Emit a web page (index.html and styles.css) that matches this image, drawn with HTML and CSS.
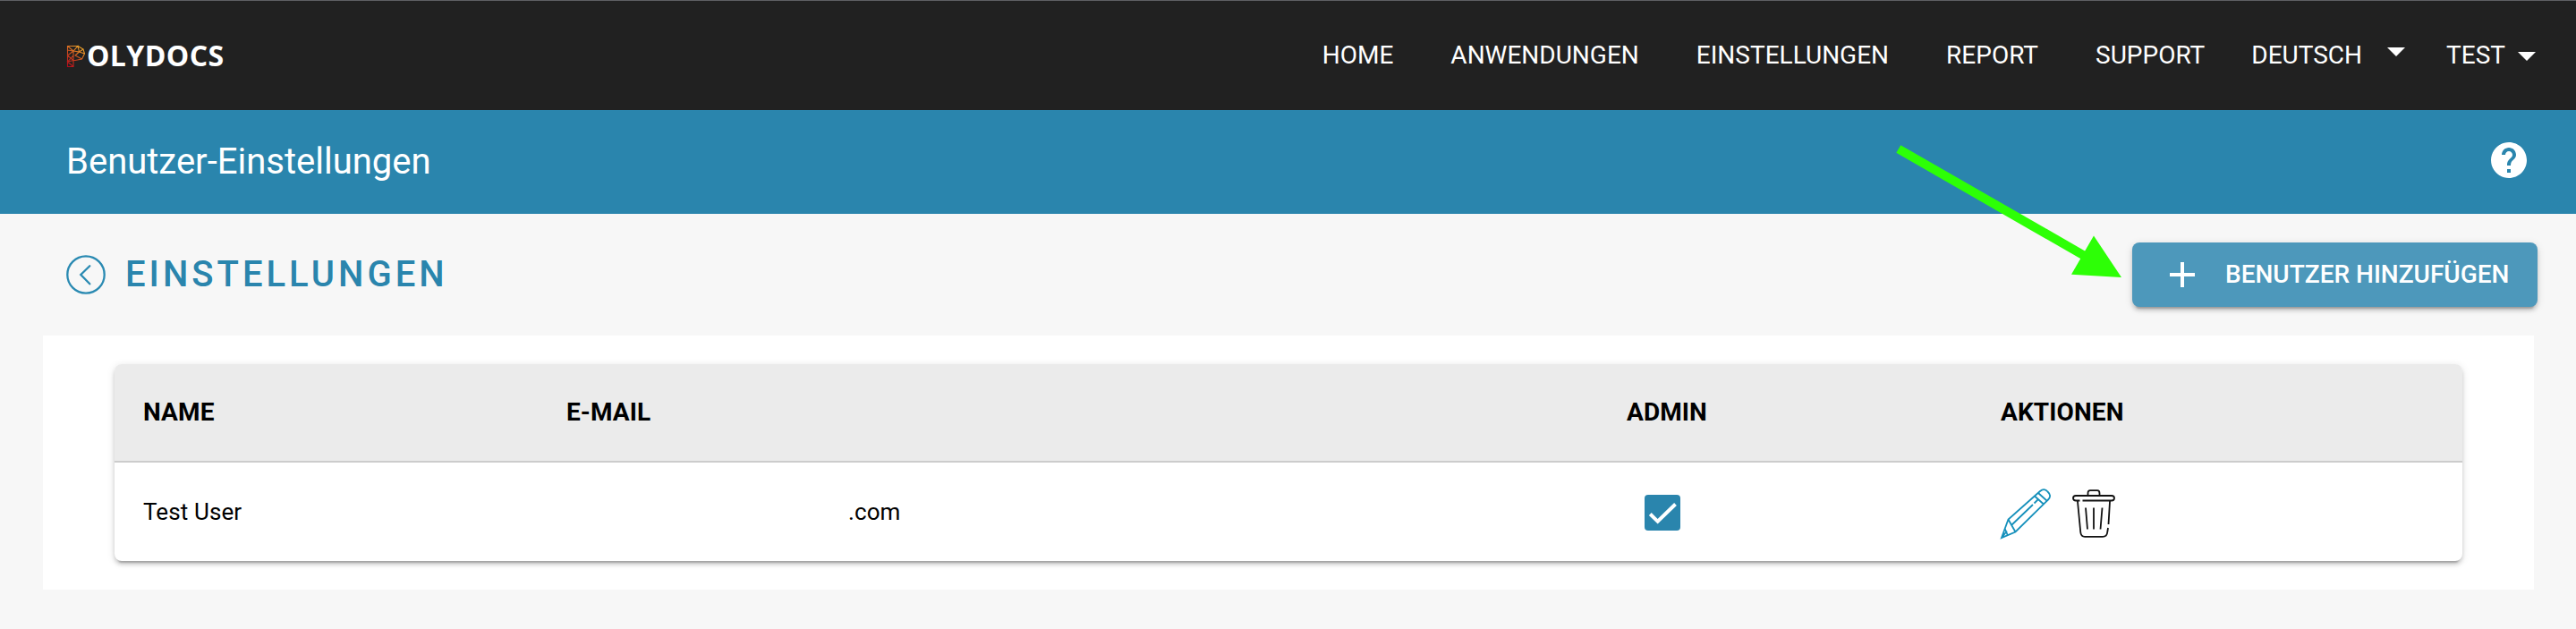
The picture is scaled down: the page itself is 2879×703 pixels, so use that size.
FILE: index.html
```html
<!DOCTYPE html>
<html lang="de">
<head>
<meta charset="utf-8">
<title>Benutzer-Einstellungen</title>
<link rel="stylesheet" href="styles.css">
</head>
<body>
<header class="topbar">
  <a class="logo">
    <svg class="logo-mark" viewBox="0 0 22 26">
      <defs><linearGradient id="heat" x1="0" y1="1" x2="0.6" y2="0"><stop offset="0" stop-color="#b3081b"/><stop offset="0.5" stop-color="#c9461f"/><stop offset="1" stop-color="#eda02a"/></linearGradient></defs>
      <path d="M1.500 1.500H13L19 5L20.500 10L17.500 16L10 17.500H8V24.500H1.500ZM1.500 1.500L8 7L13 1.500L14.500 8L8 7V17.500L1.500 12L8 7L1.500 6M14.500 8L20.500 10M14.500 8L10 12L17.500 16M8 17.500L1.500 19L8 24.500M1.500 12L1.500 19L8 12M13 1.500L19 5L14.500 8"/>
    </svg>
    <span class="logo-text">OLYDOCS</span>
  </a>
  <nav class="nav">
    <a>HOME</a><a>ANWENDUNGEN</a><a>EINSTELLUNGEN</a><a>REPORT</a><a>SUPPORT</a>
    <a class="lang">DEUTSCH<i class="caret caret-lang"></i></a>
    <a class="user">TEST<i class="caret caret-user"></i></a>
  </nav>
</header>
<section class="titlebar">
  <h2 class="title">Benutzer-Einstellungen</h2>
  <svg class="help" viewBox="0 0 24 24"><path d="M12 2C6.480 2 2 6.480 2 12s4.480 10 10 10 10-4.480 10-10S17.520 2 12 2zm1 17h-2v-2h2v2zm2.070-7.750l-.9.920C13.450 12.900 13 13.500 13 15h-2v-.5c0-1.100.450-2.100 1.170-2.830l1.240-1.260c.370-.360.590-.860.590-1.410 0-1.100-.9-2-2-2s-2 .9-2 2H8c0-2.210 1.790-4 4-4s4 1.790 4 4c0 .880-.360 1.680-.930 2.250z"/></svg>
</section>
<main>
  <div class="heading">
    <svg class="back" viewBox="0 0 44 44"><circle cx="22" cy="22" r="20.700"/><path d="M26.300 12.200L16.300 22L26.300 32.300"/></svg>
    <h1 class="page-title">EINSTELLUNGEN</h1>
    <button class="add"><svg class="plus" viewBox="0 0 24 24"><path d="M19 13h-6v6h-2v-6H5v-2h6V5h2v6h6v2z"/></svg><span>BENUTZER HINZUFÜGEN</span></button>
  </div>
  <div class="panel">
    <div class="table">
      <div class="row head"><span>NAME</span><span>E-MAIL</span><span>ADMIN</span><span>AKTIONEN</span></div>
      <div class="row"><span>Test User</span><span class="mail">.com</span>
        <span class="check"><svg class="box" viewBox="0 0 40 40"><rect width="40" height="40" rx="4"/><path d="M6.300 21.500L14.700 29.800L34.500 10.500"/></svg></span>
        <span class="actions">
          <svg class="pencil" viewBox="0 0 56 56"><path d="M1 55L8.500 34.500L44 3Q48.500-1 52.500 3.500Q57.500 8 53 12.500L16.500 48.500ZM8.500 34.500L16.500 48.500M1 55L7 47.500M38 8.500L48 17.500M42 5L52 14M12 41L36 18M37.500 16.500L42 12M5 45.500L7.500 51.500"/></svg>
          <svg class="trash" viewBox="0 0 48 54"><path d="M17.500 6.500V4.500Q17.500 1.200 20 1.200H28Q30.500 1.200 30.500 4.500V6.500M8.500 12.500H4Q1 12.500 1 9.800Q1 7 4 7H44Q47 7 47 9.800Q47 12.500 44 12.500H11.500M6 13.500L9.300 48Q9.800 52.800 14 52.800H34Q38.800 52.800 39.200 48L40 43M40.500 39L42 13.500M15 20.500L17 44.500M24 20.500V44.500M33.500 20.500L31.500 44.500"/></svg>
        </span>
      </div>
    </div>
  </div>
</main>
<svg class="pointer" viewBox="0 0 280 200"><path class="shaft" d="M11.800 16.500L225 139"/><path class="tip" d="M261 160L230 113.500L205 156.700Z"/></svg>
</body>
</html>
```
FILE: styles.css
```css
* { box-sizing: border-box; }
body { margin: 0; min-height: 703px; background: #f7f7f7; font-family: Roboto, sans-serif; color: #000; position: relative; }
svg { display: block; flex: none; }
.topbar { height: 123px; border-top: 1px solid #5f6064; background: #212121; display: flex; justify-content: space-between; padding: 0 45px 0 74px; color: #fff; }
.logo { display: flex; padding-top: 49px; }
.logo-mark { width: 22px; height: 26px; fill: none; stroke: url(#heat); stroke-width: 1.100; }
.logo-text { font: 700 32px/36px "Open Sans", sans-serif; letter-spacing: .4px; margin: -6px 0 0 1px; }
.nav { display: flex; gap: 64px; font-size: 28px; line-height: 32px; padding-top: 45px; }
.nav a { display: flex; }
.nav .lang { margin-left: -12px; }
.nav .user { margin-left: -18px; }
.caret { width: 0; border: 10px solid transparent; border-top-color: #fff; border-bottom: 0; height: 0; }
.caret-lang { margin: 7px 0 0 28px; }
.caret-user { margin: 12px 0 0 14px; }
.titlebar { height: 116px; background: #2a85ad; display: flex; justify-content: space-between; align-items: flex-start; padding: 32px 51px 0 74px; }
.title { margin: 3px 0 0; font-weight: 400; font-size: 40px; line-height: 46px; color: #fff; }
.help { width: 48px; height: 48px; fill: #fff; }
.heading { height: 136px; display: flex; align-items: flex-start; padding: 32px 43px 0 74px; }
.back { width: 44px; height: 44px; margin-top: 14px; fill: none; stroke: #2a8ab2; stroke-width: 2.300; stroke-linecap: round; }
.page-title { margin: 13px auto 0 22px; font-weight: 500; font-size: 40px; line-height: 46px; letter-spacing: 4px; color: #2a85ad; }
.add { display: flex; align-items: center; width: 453px; height: 72px; padding: 0 0 0 32px; border: 0; border-radius: 8px; background: #4d98bb; color: #fff; font: 500 28px/32px Roboto, sans-serif; box-shadow: 0 6px 2px -4px rgba(0,0,0,.2), 0 4px 4px rgba(0,0,0,.14), 0 2px 10px rgba(0,0,0,.12); }
.plus { width: 48px; height: 48px; fill: #fff; margin-right: 24px; }
.panel { margin: 0 47px 0 48px; height: 284px; padding: 32px 80px; background: #fff; }
.table { height: 220px; border-radius: 8px; background: #fff; overflow: hidden; box-shadow: 0 6px 2px -4px rgba(0,0,0,.2), 0 4px 4px rgba(0,0,0,.14), 0 2px 10px rgba(0,0,0,.12); }
.row { display: grid; grid-template-columns: 473px 1185px 418px 1fr; height: 110px; padding-left: 32px; font-size: 26px; line-height: 32px; letter-spacing: .1px; align-items: center; }
.row.head { background: #ebebeb; border-bottom: 2px solid #ccc; font-size: 28px; font-weight: 700; }
.mail { padding-left: 315px; }
.check { padding: 2px 0 0 20px; }
.box { width: 40px; height: 40px; fill: #2a85ad; }
.box path { fill: none; stroke: #fff; stroke-width: 4; }
.actions { display: flex; gap: 24px; align-items: center; }
.pencil { width: 56px; height: 56px; fill: none; stroke: #1590bb; stroke-width: 1.800; overflow: visible; margin-top: 3px; }
.trash { width: 48px; height: 54px; fill: none; stroke: #111; stroke-width: 1.800; margin-top: 3px; }
.pointer { position: absolute; left: 2110px; top: 150px; width: 280px; height: 200px; }
.shaft { stroke: #2dff06; stroke-width: 10; fill: none; }
.tip { fill: #2dff06; }
```
